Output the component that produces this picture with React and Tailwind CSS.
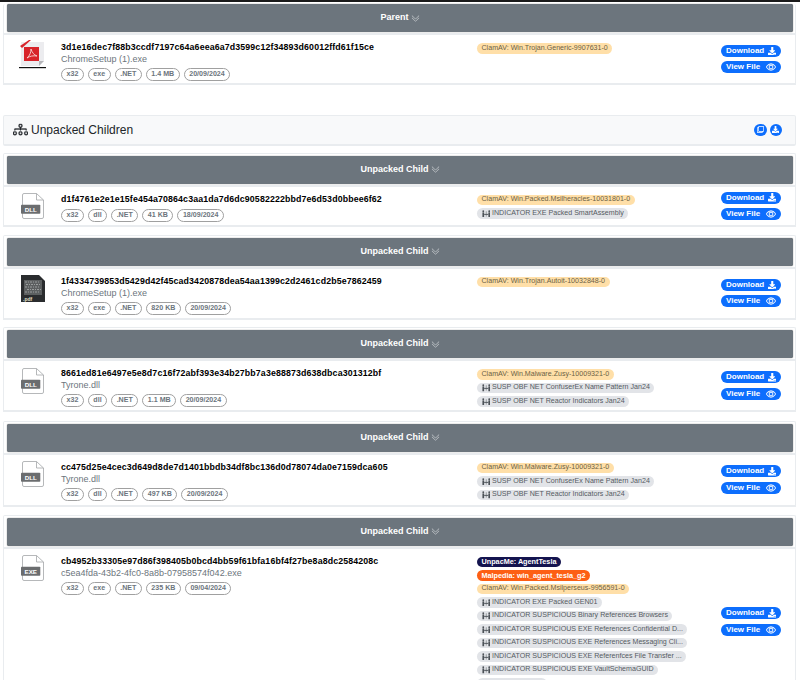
import React from 'react';
import { BsChevronDoubleDown, BsDiagram3, BsEye } from 'react-icons/bs';
import { FaDownload, FaRegClone } from 'react-icons/fa';

const ORANGE = 'bg-[#ffdfa8] text-[#6c5f45] text-[7.1px]';
const GREY = 'bg-[#e2e4e8] text-[#555b62] text-[7.1px]';

const SigIcon = () => (
  <svg viewBox="0 0 12 10" className="w-[8.5px] h-[7.5px] mr-[2px] shrink-0" fill="#4b5157">
    <circle cx="1.8" cy="1.4" r="1.3" />
    <circle cx="10.2" cy="1.4" r="1.3" />
    <rect x="0.6" y="3" width="2.4" height="7" rx="0.5" />
    <rect x="9" y="3" width="2.4" height="7" rx="0.5" />
    <rect x="3" y="5.2" width="6" height="1.3" />
    <path d="M6 1.5V9" stroke="#4b5157" strokeWidth="0.7" />
  </svg>
);

const FileIcon = ({ label }) => (
  <svg viewBox="0 0 23 26" className="w-[23px] h-[26px]">
    <path d="M3 0.5H15.500L22.500 7V24a1.500 1.500 0 0 1-1.500 1.500H3A1.500 1.500 0 0 1 1.500 24V2A1.500 1.500 0 0 1 3 0.5Z" fill="#fff" stroke="#a3a6a8" strokeWidth="0.8" />
    <path d="M15.500 0.5V7H22.500" fill="none" stroke="#a3a6a8" strokeWidth="0.8" />
    <rect x="0" y="11.700" width="19.300" height="9" rx="0.8" fill="#6b6d6f" />
    <text x="9.700" y="18.500" textAnchor="middle" fontSize="6.200" fontWeight="700" fill="#fff" fontFamily="Liberation Sans, sans-serif">{label}</text>
  </svg>
);

const PdfIcon = () => (
  <svg viewBox="0 0 27 29" className="w-[27px] h-[29px]">
    <path d="M2 2H25V21L20 26H2Z" fill="#ececef" />
    <path d="M25 21L20 26V21Z" fill="#b5b5b9" />
    <rect x="5" y="7" width="15" height="14" fill="#d8232a" />
    <path d="M8 18C11 15.500 12 12 12 9C13 12.500 15 15 18 16C14 15.500 11 16 8 18Z" fill="none" stroke="#f6d6d6" strokeWidth="0.9" />
    <path d="M1 6L10 0H12L3 8Z" fill="#d8232a" />
    <rect x="0" y="27" width="27" height="1.200" fill="#111" />
  </svg>
);

const ScriptIcon = () => (
  <svg viewBox="0 0 24 27" className="w-[24px] h-[27px]">
    <path d="M0 0H18L24 6V27H0Z" fill="#2a2c2e" />
    <rect x="3" y="5" width="18" height="15" fill="#5c5f60" />
    <path d="M4 7H18M5 9.500H20M4 12H19M6 14.500H20M4 17H18" stroke="#9a9d9d" strokeWidth="1.200" strokeDasharray="2 1 1 1" />
    <text x="2" y="25.500" fontSize="5" fontWeight="700" fill="#e4e0c8" fontFamily="Liberation Sans, sans-serif">.pdf</text>
  </svg>
);

const Pill = ({ children }) => (
  <span className="h-[13px] flex items-center px-[4.5px] rounded-full border border-[#a0a0a0] text-[7.1px] font-bold text-[#6c757d] bg-white whitespace-nowrap">
    {children}
  </span>
);

const Tag = ({ children, color, sig }) => (
  <span className={`h-[10.5px] flex items-center self-start px-[4.5px] rounded-full leading-none whitespace-nowrap ${color}`}>
    {sig && <SigIcon />}
    {children}
  </span>
);

const ActionButton = ({ label, icon }) => (
  <button className="w-[60px] h-[12px] flex items-center justify-between pl-[5px] pr-[5px] rounded-full bg-[#0d6efd] text-white text-[8px] font-bold">
    <span>{label}</span>
    {icon}
  </button>
);

const Result = ({ hash, name, icon, tags, meta, height, iconTop = 'pt-[6.5px]' }) => (
  <div className={`flex ${height} border-b-2 border-[#e9ecef]`}>
    <div className={`w-[57px] shrink-0 flex justify-center items-start ${iconTop}`}>{icon}</div>
    <div className="w-[416px] shrink-0 pt-[6px]">
      <div className="text-[8.8px] leading-[12px] font-bold text-black tracking-[0.13px]">{hash}</div>
      {name && <div className="text-[9px] leading-[12px] text-[#6c757d]">{name}</div>}
      <div className={`flex gap-[4px] ${name ? 'mt-[3px]' : 'mt-[4.5px]'}`}>
        {meta.map((m) => (
          <Pill key={m}>{m}</Pill>
        ))}
      </div>
    </div>
    <div className="w-[244px] shrink-0 flex flex-col gap-[3px] pt-[8px]">
      {tags.map((t, i) => (
        <Tag key={i} color={t.color} sig={t.sig}>
          {t.text}
        </Tag>
      ))}
    </div>
    <div className="flex flex-col gap-[4.5px] self-center">
      <ActionButton label="Download" icon={<FaDownload className="w-[8.5px] h-[8.5px]" />} />
      <ActionButton label="View File" icon={<BsEye className="w-[10px] h-[10px]" strokeWidth="0.4" />} />
    </div>
  </div>
);

const Header = ({ title }) => (
  <div className="h-[28px] ml-[3px] mr-[2px] mt-[2px] flex items-center justify-center gap-[2px] rounded-[2px] bg-[#6c757d] text-white text-[9px] font-bold shadow-[0_0_1px_#444]">
    {title}
    <BsChevronDoubleDown className="w-[9px] h-[9px] text-[#c8ccd0]" />
  </div>
);

const Section = ({ title, className, children }) => (
  <div className={`border-l border-r border-[#e9ecef] rounded-t-[2px] ${className}`}>
    <Header title={title} />
    <div className="h-[2px] mt-[1px] bg-[#e9ecef]" />
    {children}
  </div>
);

const claim = (text) => ({ text, color: ORANGE });
const sig = (text) => ({ text, color: GREY, sig: true });

export default function App() {
  return (
    <div className="w-[800px] h-[680px] overflow-hidden bg-white font-['Liberation_Sans',sans-serif]">
      <div className="h-[2px] bg-[#1a1a1a]" />
      <div className="pl-[3px] pr-[4px]">
        <Section title="Parent">
          <Result
            hash="3d1e16dec7f88b3ccdf7197c64a6eea6a7d3599c12f34893d60012ffd61f15ce"
            name="ChromeSetup (1).exe"
            icon={<PdfIcon />}
            iconTop="pt-[5px]"
            meta={['x32', 'exe', '.NET', '1.4 MB', '20/09/2024']}
            tags={[claim('ClamAV: Win.Trojan.Generic-9907631-0')]}
            height="h-[50px]"
          />
        </Section>

        <div className="mt-[30px] h-[30.5px] flex items-center justify-between pl-[9px] pr-[13px] border border-b-2 border-[#e9ecef] bg-[#f8f9fa] rounded-[2px]">
          <div className="flex items-center gap-[3px] text-[#212529] text-[12px]">
            <BsDiagram3 className="w-[15px] h-[15px]" strokeWidth="0.3" />
            Unpacked Children
          </div>
          <div className="flex gap-[3px]">
            <span className="w-[12.5px] h-[12.5px] flex items-center justify-center rounded-full bg-[#0d6efd] text-white">
              <FaRegClone className="w-[7px] h-[7px]" />
            </span>
            <span className="w-[12.5px] h-[12.5px] flex items-center justify-center rounded-full bg-[#0d6efd] text-white">
              <FaDownload className="w-[7px] h-[7px]" />
            </span>
          </div>
        </div>

        <Section title="Unpacked Child" className="mt-[7px] border-t">
          <Result
            hash="d1f4761e2e1e15fe454a70864c3aa1da7d6dc90582222bbd7e6d53d0bbee6f62"
            icon={<FileIcon label="DLL" />}
            meta={['x32', 'dll', '.NET', '41 KB', '18/09/2024']}
            tags={[claim('ClamAV: Win.Packed.Msilheracles-10031801-0'), sig('INDICATOR EXE Packed SmartAssembly')]}
            height="h-[40.5px]"
          />
        </Section>

        <Section title="Unpacked Child" className="mt-[7.5px] border-t">
          <Result
            hash="1f4334739853d5429d42f45cad3420878dea54aa1399c2d2461cd2b5e7862459"
            name="ChromeSetup (1).exe"
            icon={<ScriptIcon />}
            iconTop="pt-[6px]"
            meta={['x32', 'exe', '.NET', '820 KB', '20/09/2024']}
            tags={[claim('ClamAV: Win.Trojan.Autoit-10032848-0')]}
            height="h-[51px]"
          />
        </Section>

        <Section title="Unpacked Child" className="mt-[7.5px] border-t">
          <Result
            hash="8661ed81e6497e5e8d7c16f72abf393e34b27bb7a3e88873d638dbca301312bf"
            name="Tyrone.dll"
            icon={<FileIcon label="DLL" />}
            meta={['x32', 'dll', '.NET', '1.1 MB', '20/09/2024']}
            tags={[
              claim('ClamAV: Win.Malware.Zusy-10009321-0'),
              sig('SUSP OBF NET ConfuserEx Name Pattern Jan24'),
              sig('SUSP OBF NET Reactor Indicators Jan24'),
            ]}
            height="h-[51px]"
          />
        </Section>

        <Section title="Unpacked Child" className="mt-[8.5px] border-t">
          <Result
            hash="cc475d25e4cec3d649d8de7d1401bbdb34df8bc136d0d78074da0e7159dca605"
            name="Tyrone.dll"
            icon={<FileIcon label="DLL" />}
            meta={['x32', 'dll', '.NET', '497 KB', '20/09/2024']}
            tags={[
              claim('ClamAV: Win.Malware.Zusy-10009321-0'),
              sig('SUSP OBF NET ConfuserEx Name Pattern Jan24'),
              sig('SUSP OBF NET Reactor Indicators Jan24'),
            ]}
            height="h-[52px]"
          />
        </Section>

        <Section title="Unpacked Child" className="mt-[8px] border-t">
          <Result
            hash="cb4952b33305e97d86f398405b0bcd4bb59f61bfa16bf4f27be8a8dc2584208c"
            name="c5ea4fda-43b2-4fc0-8a8b-07958574f042.exe"
            icon={<FileIcon label="EXE" />}
            iconTop="pt-[6px]"
            meta={['x32', 'exe', '.NET', '235 KB', '09/04/2024']}
            tags={[
              { text: 'UnpacMe: AgentTesla', color: 'bg-[#14144f] text-white font-bold text-[7.25px]' },
              { text: 'Malpedia: win_agent_tesla_g2', color: 'bg-[#fd5f14] text-white font-bold text-[7.25px]' },
              claim('ClamAV: Win.Packed.Msilperseus-9956591-0'),
              sig('INDICATOR EXE Packed GEN01'),
              sig('INDICATOR SUSPICIOUS Binary References Browsers'),
              sig('INDICATOR SUSPICIOUS EXE References Confidential D...'),
              sig('INDICATOR SUSPICIOUS EXE References Messaging Cli...'),
              sig('INDICATOR SUSPICIOUS EXE Referenfces File Transfer ...'),
              sig('INDICATOR SUSPICIOUS EXE VaultSchemaGUID'),
              { text: '', color: `${GREY} w-[70px]` },
            ]}
            height="h-[148px]"
          />
        </Section>
      </div>
    </div>
  );
}
